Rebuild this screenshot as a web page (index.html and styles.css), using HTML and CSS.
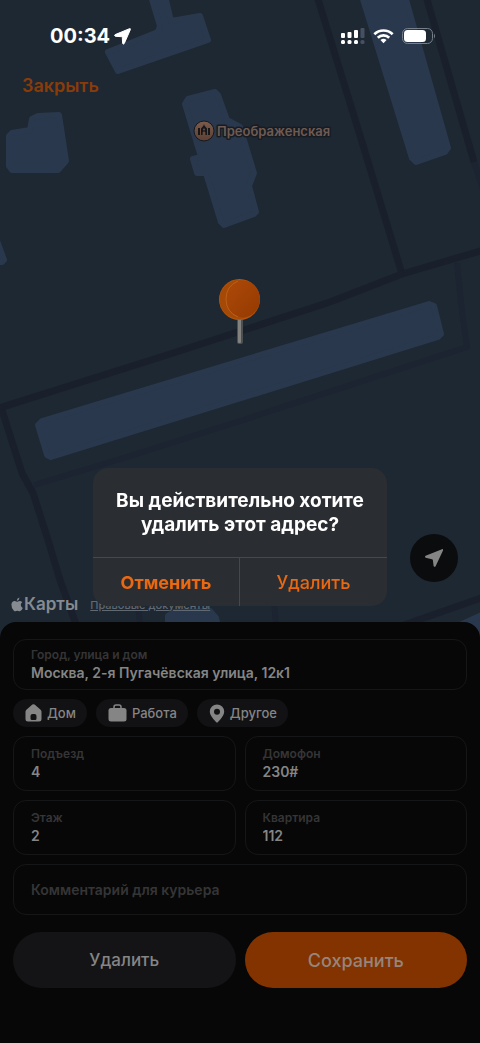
FILE: index.html
```html
<!DOCTYPE html>
<html lang="ru">
<head>
  <meta charset="UTF-8">
  <meta name="viewport" content="width=device-width, initial-scale=1.0">
  <title>Адрес доставки</title>
  <link rel="stylesheet" href="styles.css">
</head>
<body>
  <main class="map">
    <svg class="map-canvas" viewBox="0 0 480 638" preserveAspectRatio="xMidYMin slice" aria-hidden="true">
      <defs>
        <linearGradient id="pinFace" x1="0" y1="0" x2="1" y2="1">
          <stop offset="0" stop-color="#ad4908"/>
          <stop offset="1" stop-color="#943a02"/>
        </linearGradient>
        <linearGradient id="church" x1="0" y1="0" x2="0" y2="1">
          <stop offset="0" stop-color="#7b5b4c"/>
          <stop offset="1" stop-color="#5d4033"/>
        </linearGradient>
      </defs>

      <!-- Дороги -->
      <g class="road road-minor">
        <path d="M457 263L462 312L467 347L240 421L127 457L34 485"/>
        <path d="M474 162L484 192"/>
        <path d="M138 600L141 638M274 600L277 638"/>
      </g>
      <g class="road">
        <path d="M317 -4L362 142L402 274"/>
        <path d="M426 -4L474 162"/>
        <path d="M-4 409L167 355L330 302L402 274L484 250"/>
        <path d="M2 410L22 473L33 493L48 540L60 580L78 630"/>
        <path d="M398 627L484 597"/>
      </g>

      <!-- Дома -->
      <g class="building">
        <path d="M151 -4L165 -4L171 21L200 16L208 40L118 71L108 52L158 32L160 26Z"/>
        <path d="M9 136L12 133L30 130L32 119L38 116L59 115L66 161L58 170L12 170L9 166Z"/>
        <path d="M185 104L188 99L215 92L218 95L227 120L240 127L254 173L249 186L256 212L254 214L224 225L221 222L206 173L197 173L193 159L201 157Z"/>
        <path d="M362 -4L405 -4L448 148L445 152L416 162L412 158Z"/>
        <path d="M38 425L42 421L429 304L434 306L441 334L438 337L51 457L47 455Z"/>
        <path d="M-4 238L4 260L2 262L-4 262Z"/>
        <path d="M168 616L174 612L210 611L216 618L220 635L168 635Z"/>
        <path d="M460 625L484 614L484 640L460 640Z"/>
      </g>

      <!-- Храм -->
      <circle cx="204" cy="131" r="10" fill="url(#church)" stroke="#17191e" stroke-width="1"/>
      <path fill="#17171a" d="M198 128h2v7h-2zM208 128h2v7h-2zM204 124l.6 1.8 2.4 2.6V135h-1.6v-2.2a1.4 1.4 0 0 0-2.8 0V135H201v-6.6l2.4-2.6z"/>
      <circle cx="204" cy="129.400" r="1" fill="#6d4f41"/>
      <text class="map-label" x="217" y="136">Преображенская</text>

      <!-- Булавка -->
      <rect x="237" y="314" width="6" height="30" rx="2" fill="#4c5053"/>
      <rect x="238" y="314" width="3" height="29" rx="1" fill="#83817e"/>
      <circle cx="239.500" cy="299.500" r="20.500" fill="#b8560f"/>
      <circle cx="239" cy="299.500" r="19.500" fill="#a54a06"/>
      <ellipse cx="243" cy="299" rx="17" ry="18.500" fill="url(#pinFace)"/>
      <path d="M238 281Q226 286 226 299T238 317" fill="none" stroke="#b9601c" stroke-width="1"/>
    </svg>

    <header class="status-bar">
      <div class="clock">
        <span>00:34</span>
        <svg width="17" height="17" viewBox="0 0 17 17" aria-hidden="true">
          <path d="M15.500 .7L1.200 6.600Q-.2 7.500 1.400 8.300L7.600 8.700Q8.300 8.700 8.300 9.400L8.600 15.200Q9.300 17 10.300 15.400L16.300 1.700Q16.700 .3 15.500 .7Z" fill="#fff" stroke="#fff" stroke-linejoin="round"/>
        </svg>
      </div>
      <div class="indicators">
        <svg width="24" height="18" viewBox="0 0 24 18" aria-hidden="true">
          <g fill="#fff">
            <rect x="0" y="6" width="4" height="5" rx="1"/>
            <rect x="6.500" y="5" width="4" height="6" rx="1"/>
            <rect x="13" y="3" width="4" height="8" rx="1"/>
            <rect x="0" y="13" width="4" height="4" rx="1.500"/>
            <rect x="6.500" y="13" width="4" height="4" rx="1.500"/>
            <rect x="13" y="13" width="4" height="4" rx="1.500"/>
          </g>
          <g fill="#465062">
            <rect x="19.500" y="1" width="4" height="10" rx="1"/>
            <rect x="19.500" y="13" width="4" height="4" rx="1.500"/>
          </g>
        </svg>
        <svg width="21" height="16" viewBox="0 0 22 16" aria-hidden="true">
          <g fill="none" stroke="#fff" stroke-width="2.800">
            <path d="M1.400 6.200A13.600 13.600 0 0 1 20.600 6.200"/>
            <path d="M5 9.800A8.500 8.500 0 0 1 17 9.800"/>
          </g>
          <path d="M11 15.600L7.800 12.300A4.600 4.600 0 0 1 14.200 12.300Z" fill="#fff"/>
        </svg>
        <svg width="34" height="16" viewBox="0 0 34 16" aria-hidden="true">
          <rect x=".5" y=".5" width="30" height="15" rx="5" fill="none" stroke="#76808d"/>
          <rect x="2" y="2" width="22" height="12" rx="3.500" fill="#fff"/>
          <path d="M32 5.500Q34 8 32 10.500Z" fill="#76808d"/>
        </svg>
      </div>
    </header>

    <button class="close">Закрыть</button>

    <button class="locate" aria-label="Моё местоположение">
      <svg width="20" height="20" viewBox="0 0 20 20" aria-hidden="true">
        <path d="M18 1.200L1.600 7.800Q.2 8.800 1.600 9.800L8 11.300Q8.700 11.500 8.900 12.200L9.600 18Q10.500 19.600 11.600 18.200L19 2.400Q19.400 .8 18 1.200Z" fill="#858585"/>
      </svg>
    </button>

    <div class="attribution">
      <span class="maps-logo">
        <svg width="12" height="15" viewBox="0 0 12 15" aria-hidden="true">
          <path d="M8.300 .4Q8.500 3.200 5.800 3.700Q5.700 1.100 8.300 .4ZM11.300 5.200Q9.600 6.400 9.800 8Q9.900 10 11.800 10.900Q10.500 14.200 8.900 14.200Q7.900 14.200 7.400 13.900Q6.300 13.400 5.200 13.900Q3.900 14.700 2.900 13.700Q.2 10.800 .4 7.600Q.8 4.300 3.700 4.100Q4.600 4.200 5.300 4.500Q6.100 4.800 6.900 4.400Q9.500 3.300 11.300 5.200Z" fill="#858b91"/>
        </svg>
        Карты
      </span>
      <a class="legal" href="#">Правовые документы</a>
    </div>
  </main>

  <form class="sheet">
    <div class="field">
      <label for="address">Город, улица и дом</label>
      <input type="text" id="address" value="Москва, 2-я Пугачёвская улица, 12к1">
    </div>

    <div class="chips">
      <button type="button" class="chip">
        <svg width="17" height="18" viewBox="0 0 17 18" aria-hidden="true">
          <path fill-rule="evenodd" d="M7.400 .6Q8.500 -.2 9.600 .6L15.600 5.700Q16.500 6.500 16.500 7.600V15Q16.500 17.500 14 17.500H3Q.5 17.500 .5 15V7.600Q.5 6.500 1.400 5.700ZM7.500 10Q5.500 10 5.500 12V14.500Q5.500 16 7 16H10Q11.500 16 11.500 14.500V12Q11.500 10 9.500 10Z" fill="#858585"/>
        </svg>
        Дом
      </button>
      <button type="button" class="chip">
        <svg width="19" height="18" viewBox="0 0 19 18" aria-hidden="true">
          <path d="M6 4.500V3Q6 1 8 1H11Q13 1 13 3V4.500" fill="none" stroke="#858585" stroke-width="1.500"/>
          <rect x=".5" y="4" width="18" height="13.500" rx="2.500" fill="#858585"/>
        </svg>
        Работа
      </button>
      <button type="button" class="chip">
        <svg width="16" height="19" viewBox="0 0 16 19" aria-hidden="true">
          <path fill-rule="evenodd" d="M8 .5A7.200 7.200 0 0 1 15.200 7.700Q15.200 11.500 9 18Q8 19 7 18Q.8 11.500 .8 7.700A7.200 7.200 0 0 1 8 .5ZM8 4.700A3 3 0 1 0 8 10.700A3 3 0 1 0 8 4.700Z" fill="#858585"/>
        </svg>
        Другое
      </button>
    </div>

    <div class="row">
      <div class="field">
        <label for="entrance">Подъезд</label>
        <input type="text" id="entrance" value="4">
      </div>
      <div class="field">
        <label for="intercom">Домофон</label>
        <input type="text" id="intercom" value="230#">
      </div>
    </div>

    <div class="row">
      <div class="field">
        <label for="floor">Этаж</label>
        <input type="text" id="floor" value="2">
      </div>
      <div class="field">
        <label for="flat">Квартира</label>
        <input type="text" id="flat" value="112">
      </div>
    </div>

    <div class="field">
      <input type="text" id="comment" aria-label="Комментарий для курьера" placeholder="Комментарий для курьера">
    </div>

    <div class="row actions">
      <button type="button" class="action">Удалить</button>
      <button type="submit" class="action save">Сохранить</button>
    </div>
  </form>

  <div class="overlay">
    <div class="dialog" role="alertdialog" aria-modal="true" aria-labelledby="dialog-title">
      <h1 class="dialog-title" id="dialog-title">Вы действительно хотите удалить этот адрес?</h1>
      <div class="dialog-buttons">
        <button class="cancel">Отменить</button>
        <button>Удалить</button>
      </div>
    </div>
  </div>
</body>
</html>
```
FILE: styles.css
```css
* {
  box-sizing: border-box;
}

body {
  font-family: Inter, 'Liberation Sans', sans-serif;
  margin: 0;
  min-height: 100vh;
  display: flex;
  flex-direction: column;
  background: #070707;
  color: #858585;
}

button,
input {
  font-family: inherit;
  margin: 0;
  padding: 0;
  border: none;
  background: none;
  color: inherit;
}

button {
  cursor: pointer;
}

svg {
  flex: none;
}

/* Карта */
.map {
  position: relative;
  flex: 1;
  display: flex;
  flex-direction: column;
  align-items: flex-start;
  min-height: 400px;
  padding-bottom: 23px;
  background: #1e2833;
}

.map-canvas {
  position: absolute;
  inset: 0;
  width: 100%;
  height: 100%;
}

.map > :not(.map-canvas) {
  z-index: 1;
}

.road {
  fill: none;
  stroke: #19202b;
  stroke-width: 7;
  stroke-linejoin: round;
}

.road-minor {
  stroke: #1c2331;
  stroke-width: 6;
}

.building {
  fill: #29384c;
  stroke: #29384c;
  stroke-width: 6;
  stroke-linejoin: round;
}

.map-label {
  font-size: 13px;
  font-weight: 600;
  fill: #6f5b53;
  stroke: #171b22;
  stroke-width: 3px;
  stroke-linejoin: round;
  paint-order: stroke;
}

.status-bar {
  align-self: stretch;
  display: flex;
  justify-content: space-between;
  align-items: center;
  height: 72px;
  padding: 0 44px 0 50px;
  color: #fff;
}

.clock {
  display: flex;
  align-items: center;
  gap: 4px;
  font-size: 20px;
  font-weight: 700;
}

.indicators {
  display: flex;
  align-items: center;
  gap: 8px;
}

.close {
  margin-left: 22px;
  font-size: 18px;
  line-height: 28px;
  font-weight: 600;
  color: #8a3c08;
}

.locate {
  display: flex;
  justify-content: center;
  align-items: center;
  width: 48px;
  height: 48px;
  margin: auto 22px 12px auto;
  border-radius: 50%;
  background: #0b0c0d;
}

.attribution {
  display: flex;
  align-items: center;
  gap: 12px;
  margin-left: 11px;
}

.maps-logo {
  display: flex;
  align-items: center;
  gap: 1px;
  font-size: 17px;
  line-height: 21px;
  font-weight: 600;
  color: #858b91;
}

.legal {
  font-size: 11px;
  font-weight: 500;
  color: #606871;
}

/* Форма адреса */
.sheet {
  position: relative;
  z-index: 1;
  display: flex;
  flex-direction: column;
  gap: 9px;
  margin-top: -16px;
  padding: 17px 13px 55px;
  border-radius: 16px 16px 0 0;
  background: #070707;
}

.row {
  display: grid;
  grid-template-columns: 1fr 1fr;
  gap: 9px;
}

.field {
  display: flex;
  flex-direction: column;
  justify-content: center;
  height: 51px;
  padding: 0 17px;
  border: 1px solid #151617;
  border-radius: 13px;
}

.row .field {
  height: 55px;
}

.field label {
  font-size: 12px;
  line-height: 16px;
  font-weight: 600;
  color: #353536;
}

.field input {
  width: 100%;
  height: 19px;
  font-size: 14px;
  font-weight: 600;
  outline: none;
}

.field input::placeholder {
  color: #353536;
  opacity: 1;
}

.chips {
  display: flex;
  gap: 9px;
}

.chip {
  display: flex;
  align-items: center;
  gap: 5px;
  height: 28px;
  padding: 0 11px 0 12px;
  border-radius: 14px;
  background: #121214;
  font-size: 13px;
  font-weight: 500;
}

.actions {
  margin-top: 8px;
}

.action {
  height: 56px;
  border-radius: 28px;
  background: #141416;
  font-size: 17px;
  font-weight: 500;
}

.save {
  background: #833300;
  font-size: 18px;
  color: #95857c;
}

/* Диалог подтверждения */
.overlay {
  position: fixed;
  inset: 0;
  z-index: 2;
  display: flex;
  justify-content: center;
  align-items: center;
  padding-top: 31px;
}

.dialog {
  width: 294px;
  border-radius: 15px;
  background: #2a2d31;
  overflow: hidden;
}

.dialog-title {
  margin: 0;
  padding: 21px 16px 20px;
  font-size: 19px;
  line-height: 24px;
  font-weight: 700;
  text-align: center;
  color: #fff;
}

.dialog-buttons {
  display: grid;
  grid-template-columns: 1fr 1fr;
  border-top: 1px solid #45484c;
}

.dialog-buttons button {
  height: 48px;
  font-size: 18px;
  font-weight: 500;
  color: #ea680f;
}

.dialog-buttons .cancel {
  border-right: 1px solid #45484c;
  font-weight: 700;
}
```
